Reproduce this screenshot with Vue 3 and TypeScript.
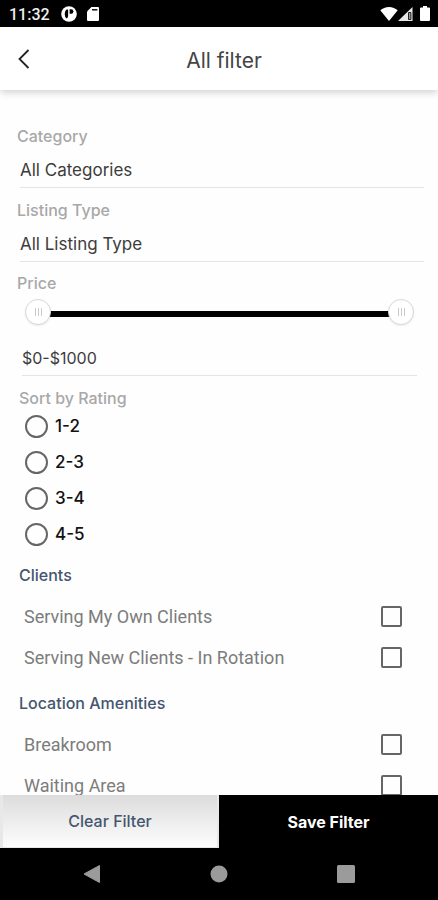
<script setup lang="ts">
import { computed, ref } from 'vue'

interface AmenityGroup {
  id: string
  title: string
  options: string[]
}

const MAX_PRICE = 1000

const category = ref('All Categories')
const listingType = ref('All Listing Type')
const low = ref(0)
const high = ref(MAX_PRICE)
const rating = ref('')
const checked = ref<string[]>([])

const ratings = ['1-2', '2-3', '3-4', '4-5']
const groups: AmenityGroup[] = [
  { id: 'clients', title: 'Clients', options: ['Serving My Own Clients', 'Serving New Clients - In Rotation'] },
  { id: 'location', title: 'Location Amenities', options: ['Breakroom', 'Waiting Area'] },
]

const priceText = computed(() => `$${low.value}-$${high.value}`)
const barStyle = computed(() => ({
  marginLeft: `${(low.value / MAX_PRICE) * 100}%`,
  marginRight: `${100 - (high.value / MAX_PRICE) * 100}%`,
}))

function keepOrder(moved: 'low' | 'high'): void {
  if (low.value <= high.value) return
  if (moved === 'low') low.value = high.value
  else high.value = low.value
}

function clearFilter(): void {
  category.value = 'All Categories'
  listingType.value = 'All Listing Type'
  low.value = 0
  high.value = MAX_PRICE
  rating.value = ''
  checked.value = []
}
</script>

<template>
  <div class="screen">
    <div class="status">
      <span class="clock">11:32</span>
      <svg class="app-icon" viewBox="0 0 16 16" width="16" height="16" aria-hidden="true">
        <circle cx="8" cy="8" r="7.8" fill="#fff" />
        <path d="M5.600 3.600Q3.700 5 3.700 8t1.900 4.400q1.500-.6 1.500-2.600V3.600z" fill="#000" />
        <path d="M8.600 3.300h1.600a2.200 2.200 0 0 1 0 4.400H8.600z" fill="#000" />
      </svg>
      <svg class="sd-icon" viewBox="0 0 12 14" width="12" height="14" aria-hidden="true">
        <path d="M4.400 0H11a1 1 0 0 1 1 1v12a1 1 0 0 1-1 1H1a1 1 0 0 1-1-1V4.400z" fill="#fff" />
        <path d="M5 2.800h5.400" stroke="#000" stroke-width="1.400" />
      </svg>
      <div class="signals">
        <svg viewBox="0 0 18 14" width="18" height="14" aria-hidden="true">
          <path d="M9 14 .3 3.300C2.600 1.300 5.600 0 9 0s6.400 1.300 8.700 3.300z" fill="#fff" />
        </svg>
        <svg viewBox="0 0 15 14" width="15" height="14" aria-hidden="true">
          <path d="M0 14 14.500 0v14z" fill="#e8e8e8" />
          <path d="M10.500 5.500h2.400v7h-2.400z" fill="#999" stroke="#222" stroke-width="1" />
        </svg>
        <svg class="battery" viewBox="0 0 10 15" width="10" height="15" aria-hidden="true">
          <path d="M3 0h4v1.600h2a1 1 0 0 1 1 1V14a1 1 0 0 1-1 1H1a1 1 0 0 1-1-1V2.600a1 1 0 0 1 1-1h2z" fill="#fff" />
        </svg>
      </div>
    </div>

    <header class="header">
      <button class="back" type="button" aria-label="Back">
        <svg viewBox="0 0 12 20" width="12" height="20" aria-hidden="true">
          <path d="M10.500 1 1.500 10l9 9" fill="none" stroke="#222" stroke-width="1.800" />
        </svg>
      </button>
      <h1>All filter</h1>
    </header>

    <main class="content">
      <div class="field">
        <label for="category">Category</label>
        <select id="category" v-model="category">
          <option>All Categories</option>
        </select>
      </div>
      <div class="field">
        <label for="listing">Listing Type</label>
        <select id="listing" v-model="listingType">
          <option>All Listing Type</option>
        </select>
      </div>

      <div class="field price">
        <label for="price">Price</label>
        <div class="slider">
          <div class="track"><div class="bar" :style="barStyle"></div></div>
          <input v-model.number="low" type="range" min="0" :max="MAX_PRICE" aria-label="Lowest price" @input="keepOrder('low')" />
          <input v-model.number="high" type="range" min="0" :max="MAX_PRICE" aria-label="Highest price" @input="keepOrder('high')" />
        </div>
        <input id="price" class="amount" type="text" readonly :value="priceText" />
      </div>

      <fieldset class="ratings">
        <legend>Sort by Rating</legend>
        <label v-for="r in ratings" :key="r" class="rating">
          <input v-model="rating" type="radio" name="rating" :value="r" />
          <span>{{ r }}</span>
        </label>
      </fieldset>

      <section v-for="g in groups" :key="g.id" class="group">
        <h2>{{ g.title }}</h2>
        <label v-for="o in g.options" :key="o" class="option">
          <span>{{ o }}</span>
          <input v-model="checked" type="checkbox" :value="o" />
        </label>
      </section>
    </main>

    <footer class="actions">
      <button class="clear" type="button" @click="clearFilter">Clear Filter</button>
      <button class="save" type="button">Save Filter</button>
    </footer>

    <nav class="system">
      <button type="button" aria-label="System back">
        <svg viewBox="0 0 18 18" width="18" height="18"><path d="M1 9 16.500.5v17z" fill="#9b9b9b" stroke="#9b9b9b" stroke-linejoin="round" /></svg>
      </button>
      <button type="button" aria-label="Home">
        <svg viewBox="0 0 18 18" width="18" height="18"><circle cx="9" cy="9" r="8.500" fill="#9b9b9b" /></svg>
      </button>
      <button type="button" aria-label="Recent apps">
        <svg viewBox="0 0 18 18" width="18" height="18"><rect width="18" height="18" rx="1.500" fill="#9b9b9b" /></svg>
      </button>
    </nav>
  </div>
</template>

<style>
body {
  margin: 0;
  background: #fff;
}
</style>

<style scoped>
.screen {
  display: flex;
  flex-direction: column;
  height: 100vh;
  background: #fefefe;
  font-family: Inter, "Liberation Sans", sans-serif;
  font-size: 16px;
  line-height: 24px;
  color: #333;
}
button,
input,
select {
  font: inherit;
  margin: 0;
  border: 0;
  padding: 0;
  background: none;
  border-radius: 0;
}
.status {
  display: flex;
  flex: none;
  align-items: center;
  height: 27px;
  padding: 0 8px 0 9px;
  background: #000;
}
.clock {
  width: 52px;
  padding-top: 2px;
  font-family: Roboto, sans-serif;
  font-weight: 500;
  color: #eee;
}
.sd-icon {
  margin-left: 10px;
}
.signals {
  display: flex;
  align-items: center;
  margin-left: auto;
}
.battery {
  margin-left: 7px;
}
.header {
  position: relative;
  z-index: 1;
  display: grid;
  grid-template-columns: 48px 1fr 48px;
  flex: none;
  align-items: center;
  height: 63px;
  background: #fff;
  box-shadow: 0 2px 8px rgba(0, 0, 0, 0.2);
}
.back {
  display: flex;
  align-items: center;
  height: 48px;
  padding-left: 18px;
}
h1 {
  margin: 0;
  padding: 4px 0 0 10px;
  font-size: 21px;
  font-weight: 400;
  text-align: center;
  color: #444;
}
.content {
  flex: 1;
  min-height: 0;
  padding-top: 34px;
  overflow-y: auto;
  scrollbar-width: none;
}
.field {
  display: flex;
  flex-direction: column;
  margin: 0 14px 10px 17px;
}
.field label,
legend {
  font-weight: 500;
  color: #a8a8a8;
}
.field select,
.amount {
  appearance: none;
  box-sizing: border-box;
  height: 40px;
  padding-top: 5px;
  border-bottom: 1px solid #e4e4e4;
  color: #3c3c3c;
  outline: none;
}
.field select {
  margin-left: 3px;
  font-size: 17px;
}
.price {
  margin-top: -1px;
}
.slider {
  display: grid;
  align-items: center;
  margin: 4px 10px 11px 8px;
}
.slider > * {
  grid-area: 1 / 1;
}
.track {
  padding: 3px 13px 0;
}
.bar {
  height: 6px;
  background: #000;
}
.slider input {
  appearance: none;
  width: 100%;
  height: 26px;
  pointer-events: none;
}
.slider input::-webkit-slider-thumb {
  appearance: none;
  box-sizing: border-box;
  width: 26px;
  height: 26px;
  border: 1px solid #d8d8d8;
  border-radius: 50%;
  background:
    repeating-linear-gradient(90deg, #ccc 0 1px, transparent 1px 3px) center / 7px 8px no-repeat,
    #fff;
  box-shadow: 0 1px 2px rgba(0, 0, 0, 0.08);
  pointer-events: auto;
}
.amount {
  margin: 0 7px 0 5px;
}
.ratings {
  display: flex;
  flex-direction: column;
  gap: 12px;
  margin: 0 19px 4px;
  border: 0;
  padding: 0;
}
legend {
  padding: 0;
  margin-bottom: 4px;
}
.rating {
  display: flex;
  align-items: center;
  gap: 7px;
  padding-left: 6px;
  font-weight: 500;
  font-size: 17px;
  color: #111;
}
.rating input,
.option input {
  appearance: none;
  box-sizing: border-box;
  border: 2px solid #666;
}
.rating input {
  width: 23px;
  height: 23px;
  border-radius: 50%;
}
.rating input:checked {
  background: radial-gradient(#222 5px, transparent 6px);
}
.group {
  padding: 13px 36px 0 19px;
}
h2 {
  margin: 0 0 9px;
  font-size: 16px;
  font-weight: 500;
  color: #44566f;
}
.option {
  display: flex;
  align-items: center;
  justify-content: space-between;
  height: 41px;
  padding-left: 5px;
  font-family: Roboto, sans-serif;
  font-size: 18px;
  color: #7c7c7c;
}
.option input {
  width: 21px;
  height: 21px;
  border-radius: 2px;
}
.option input:checked {
  background: #444;
}
.actions {
  display: grid;
  grid-template-columns: 1fr 1fr;
  flex: none;
  height: 53px;
  background: #000;
}
.clear {
  border: solid #e8e8e8;
  border-width: 0 2px 1px 3px;
  background: linear-gradient(#dcdcdc, #fdfdfd);
  font-weight: 500;
  color: #44566f;
}
.save {
  background: #000;
  font-weight: 700;
  color: #fff;
}
.system {
  display: flex;
  flex: none;
  justify-content: space-between;
  align-items: center;
  height: 52px;
  padding: 0 19%;
  background: #000;
}
.system button {
  display: flex;
}
</style>
